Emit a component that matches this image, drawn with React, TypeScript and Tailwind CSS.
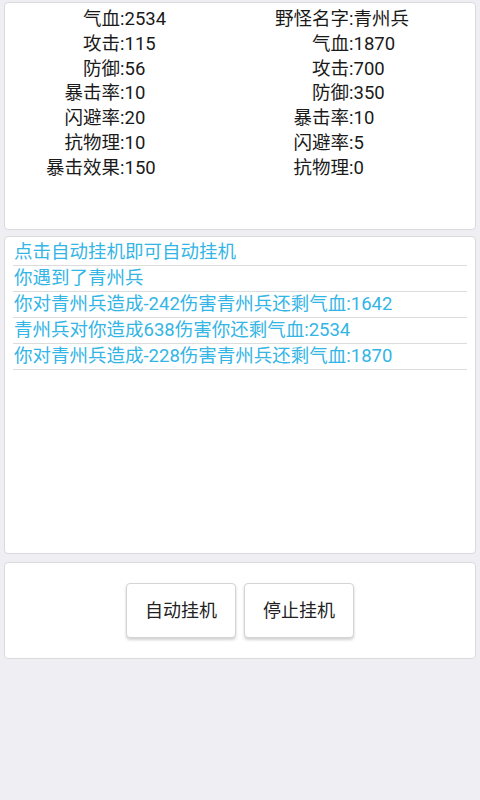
import React from "react";

const left: [string, string][] = [
  ["气血", "2534"],
  ["攻击", "115"],
  ["防御", "56"],
  ["暴击率", "10"],
  ["闪避率", "20"],
  ["抗物理", "10"],
  ["暴击效果", "150"],
];
const right: [string, string][] = [
  ["野怪名字", "青州兵"],
  ["气血", "1870"],
  ["攻击", "700"],
  ["防御", "350"],
  ["暴击率", "10"],
  ["闪避率", "5"],
  ["抗物理", "0"],
];
const logs = [
  "点击自动挂机即可自动挂机",
  "你遇到了青州兵",
  "你对青州兵造成-242伤害青州兵还剩气血:1642",
  "青州兵对你造成638伤害你还剩气血:2534",
  "你对青州兵造成-228伤害青州兵还剩气血:1870",
];

export default function App() {
  return (
    <div
      className="w-[480px] h-[800px] bg-[#eeeef3] flex flex-col px-[4px] pt-[2px]"
      style={{ fontFamily: 'Roboto, "Noto Sans CJK SC", sans-serif' }}
    >
      <div className="h-[228px] bg-white border border-[#d9d9de] rounded-[4px] pt-[4px] grid grid-cols-2 text-[18.5px] text-[#1a1a1a]">
        <div className="flex flex-col">
          {left.map(([k, v]) => (
            <div key={k} className="flex h-[24.8px] leading-[24.8px]">
              <span className="w-[115px] text-right whitespace-nowrap">{k}</span>
              <span className="whitespace-nowrap">:{v}</span>
            </div>
          ))}
        </div>
        <div className="flex flex-col">
          {right.map(([k, v]) => (
            <div key={k} className="flex h-[24.8px] leading-[24.8px]">
              <span className="w-[109px] text-right whitespace-nowrap">{k}</span>
              <span className="whitespace-nowrap">:{v}</span>
            </div>
          ))}
        </div>
      </div>
      <div className="mt-[6px] h-[318px] bg-white border border-[#d9d9de] rounded-[4px] pt-[3px] px-[8px] text-[18.5px] text-[#33b5e5]">
        {logs.map((l, i) => (
          <div key={i} className="h-[26px] leading-[25px] border-b border-[#dcdcdc] pl-[1px] whitespace-nowrap">
            {l}
          </div>
        ))}
      </div>
      <div className="mt-[8px] h-[97px] bg-white border border-[#d9d9de] rounded-[4px] flex items-center justify-center gap-[8px]">
        <button className="w-[110px] h-[55px] bg-white border border-[#d4d4d8] rounded-[4px] shadow-[0_2px_3px_rgba(0,0,0,0.18)] text-[18px] text-[#222]">
          自动挂机
        </button>
        <button className="w-[110px] h-[55px] bg-white border border-[#d4d4d8] rounded-[4px] shadow-[0_2px_3px_rgba(0,0,0,0.18)] text-[18px] text-[#222]">
          停止挂机
        </button>
      </div>
    </div>
  );
}
